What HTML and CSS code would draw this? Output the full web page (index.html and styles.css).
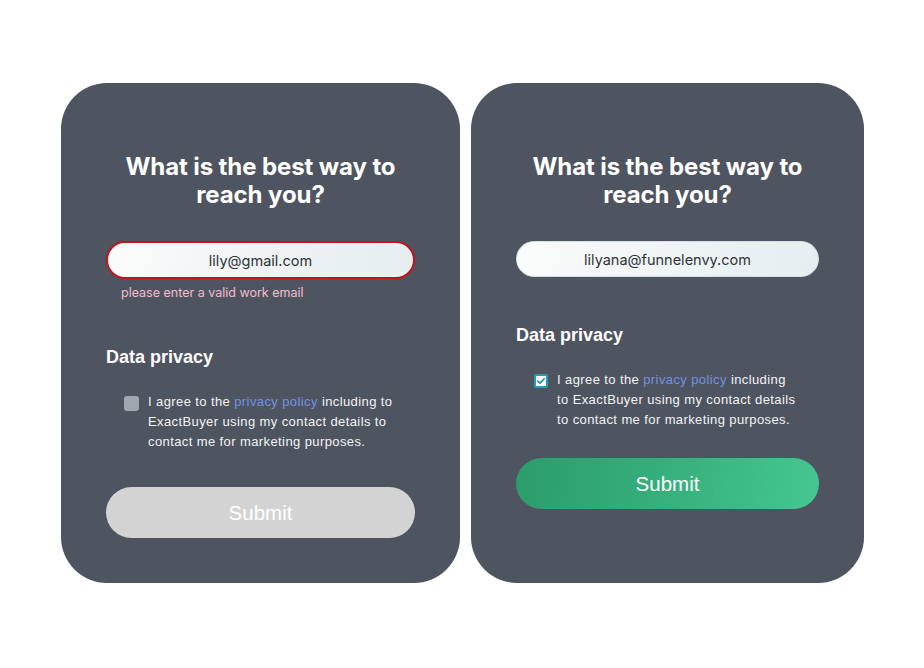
FILE: index.html
```html
<!DOCTYPE html>
<html lang="en">
<head>
<meta charset="utf-8">
<title>Reach you</title>
<link rel="stylesheet" href="styles.css">
</head>
<body>
<main class="stage">
  <section class="card card--error">
    <h1 class="title">What is the best way to<br>reach you?</h1>
    <div class="field field--invalid">lily@gmail.com</div>
    <p class="error">please enter a valid work email</p>
    <h2 class="section">Data privacy</h2>
    <label class="consent">
      <span class="box"></span>
      <span class="consent-text">I agree to the <a class="link">privacy policy</a> including to ExactBuyer using my contact details to contact me for marketing purposes.</span>
    </label>
    <button class="submit submit--disabled">Submit</button>
  </section>
  <section class="card card--ok">
    <h1 class="title">What is the best way to<br>reach you?</h1>
    <div class="field">lilyana@funnelenvy.com</div>
    <h2 class="section section--ok">Data privacy</h2>
    <label class="consent">
      <span class="box box--checked"><svg viewBox="0 0 14 14" width="10" height="10"><path d="M2.5 7.2 L5.6 10 L11.5 3.8" fill="none" stroke="#1d8fa3" stroke-width="2.2" stroke-linecap="round" stroke-linejoin="round"/></svg></span>
      <span class="consent-text">I agree to the <a class="link">privacy policy</a> including to ExactBuyer using my contact details to contact me for marketing purposes.</span>
    </label>
    <button class="submit submit--active">Submit</button>
  </section>
</main>
</body>
</html>
```
FILE: styles.css
```css
* { box-sizing: border-box; }
html, body { margin: 0; padding: 0; background: #ffffff; }
body { width: 924px; height: 668px; overflow: hidden; font-family: "Liberation Sans", Arial, sans-serif; }
.stage {
  display: flex;
  gap: 11px;
  padding: 83px 0 0 61px;
}
.card {
  background: #4f5461;
  border-radius: 46px;
  height: 500px;
  padding: 70px 45px 0 45px;
  display: flex;
  flex-direction: column;
}
.card--error { width: 399px; }
.card--ok { width: 393px; }
.title {
  margin: 0;
  color: #ffffff;
  font-family: Inter, "Noto Sans", sans-serif;
  font-weight: 700;
  font-size: 24px;
  line-height: 28px;
  letter-spacing: -0.1px;
  text-align: center;
}
.field {
  margin-top: 32px;
  height: 36px;
  border-radius: 18px;
  background: linear-gradient(100deg, #fbfcfc 0%, #eef3f4 55%, #e6eef0 100%);
  border: 1px solid #d8dfe2;
  display: flex;
  align-items: center;
  justify-content: center;
  font-family: Inter, "Noto Sans", sans-serif;
  font-size: 14.5px;
  color: #2f3338;
}
.field--invalid {
  height: 38px;
  border: 2px solid #c1141b;
  border-radius: 19px;
}
.error {
  margin: 6px 0 0 15px;
  font-family: Inter, "Noto Sans", sans-serif;
  font-size: 12.5px;
  line-height: 16px;
  color: #f3bccb;
}
.section {
  margin: 45px 0 0 0;
  color: #ffffff;
  font-size: 18px;
  line-height: 22px;
  font-weight: 700;
}
.section--ok { margin-top: 47px; }
.consent {
  margin-top: 24px;
  padding-left: 18px;
  display: flex;
  gap: 9px;
  align-items: flex-start;
}
.box {
  flex: none;
  width: 15px;
  height: 15px;
  margin-top: 4px;
  border-radius: 3px;
  background: #a2a6b0;
  display: flex;
  align-items: center;
  justify-content: center;
}
.box--checked {
  background: #ffffff;
  border: 2px solid #22a0b3;
  width: 14px;
  height: 14px;
  border-radius: 2px;
}
.consent-text {
  color: #f2f3f5;
  font-size: 13px;
  line-height: 20px;
  letter-spacing: 0.4px;
}
.card--error .consent-text { width: 252px; }
.card--ok .consent-text { width: 240px; }
.link { color: #6f93e0; }
.submit {
  border: none;
  height: 51px;
  border-radius: 26px;
  color: #ffffff;
  font-family: "Liberation Sans", Arial, sans-serif;
  font-size: 20.5px;
  width: 100%;
}
.submit--disabled {
  margin-top: 35px;
  background: #d3d3d3;
}
.submit--active {
  margin-top: 28px;
  background: linear-gradient(100deg, #2c9c6c 0%, #36b07c 50%, #45c791 100%);
}
```
